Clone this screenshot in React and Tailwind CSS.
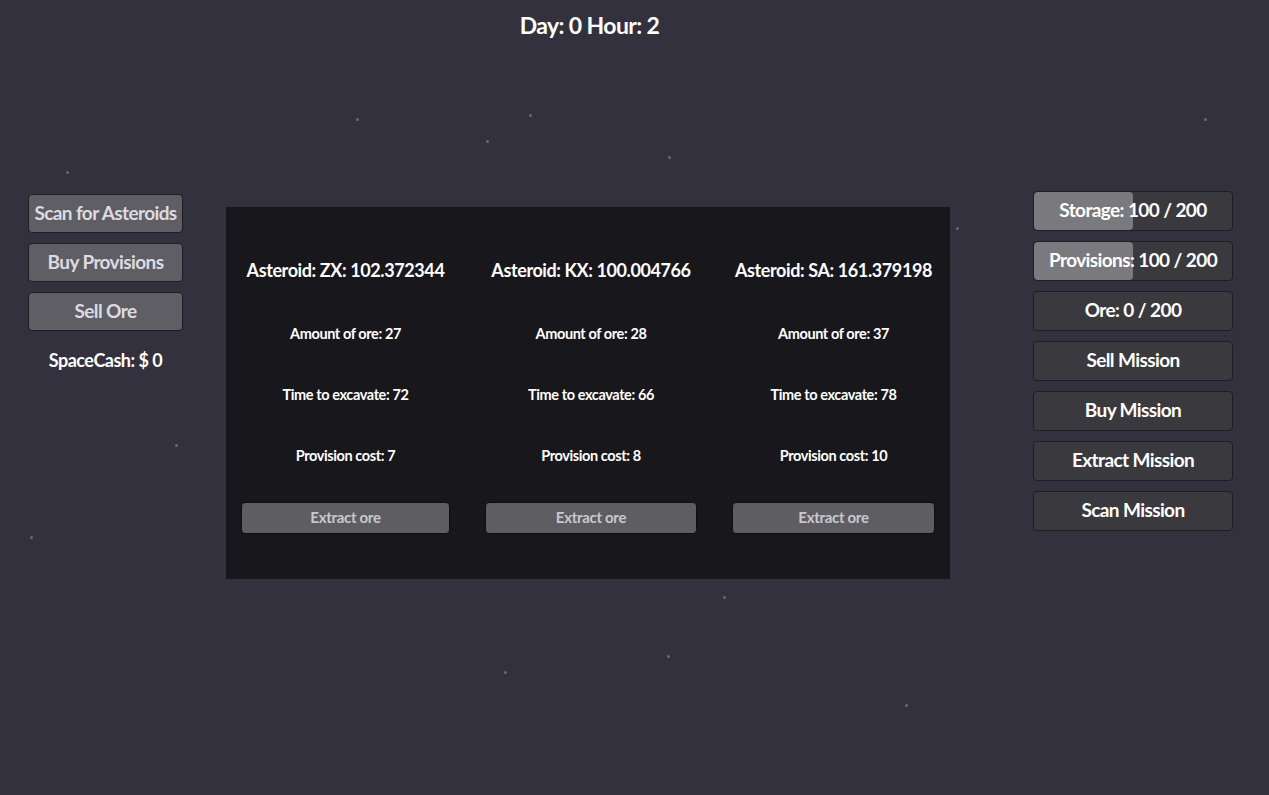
import React from 'react';

const stars = [
  [356, 118], [529, 114], [486, 140], [668, 156], [66, 171], [1204, 118],
  [956, 227], [175, 444], [30, 536], [604, 540], [339, 560], [723, 596],
  [667, 655], [504, 671], [905, 704], [432, 348],
];

const asteroids = [
  { name: 'ZX', dist: '102.372344', ore: 27, time: 72, cost: 7, w: 'w-[209px]' },
  { name: 'KX', dist: '100.004766', ore: 28, time: 66, cost: 8, w: 'w-[212px]' },
  { name: 'SA', dist: '161.379198', ore: 37, time: 78, cost: 10, w: 'w-[203px]' },
];

function LeftButton({ children }) {
  return (
    <button className="w-[155px] h-[39px] rounded-[4px] bg-[#5f5e65] border border-[#1d1c22] text-[#dcdbe0] text-[19px] font-bold tracking-[-0.6px]">
      {children}
    </button>
  );
}

function StatBar({ label, value, fill }) {
  return (
    <div className="relative w-[200px] h-[40px] rounded-[4px] bg-[#3a393e] border border-[#1d1c22] overflow-hidden">
      {fill > 0 && (
        <div className="absolute left-0 top-0 h-full bg-[#7a797e] rounded-[4px]" style={{ width: `${fill * 100}%` }} />
      )}
      <div className="relative h-full flex items-center justify-center text-white text-[19px] font-bold tracking-[-0.6px]">
        {label}: {value}
      </div>
    </div>
  );
}

function MissionButton({ children }) {
  return (
    <button className="w-[200px] h-[40px] rounded-[4px] bg-[#3a393e] border border-[#1d1c22] text-white text-[19px] font-bold tracking-[-0.6px]">
      {children}
    </button>
  );
}

export default function App() {
  return (
    <div className="relative w-full h-[795px] bg-[#34313e] overflow-hidden font-['Lato','Liberation_Sans',sans-serif]">
      {/* stars */}
      {stars.map(([x, y], i) => (
        <div key={i} className="absolute w-[3px] h-[3px] rounded-full bg-[#6d6a78]" style={{ left: x, top: y }} />
      ))}

      <div className="relative flex justify-center pt-[8px] pr-[90px]">
        <h1 className="text-white text-[23px] font-bold tracking-[-0.6px]">Day: 0 Hour: 2</h1>
      </div>

      <div className="relative flex items-start mt-[164px] pl-[28px]">
        {/* left controls */}
        <div className="flex flex-col items-center gap-[10px] mt-[-13px]">
          <LeftButton>Scan for Asteroids</LeftButton>
          <LeftButton>Buy Provisions</LeftButton>
          <LeftButton>Sell Ore</LeftButton>
          <div className="mt-[6px] text-white text-[18px] font-bold tracking-[-0.5px]">SpaceCash: $ 0</div>
        </div>

        {/* asteroid panel */}
        <div className="ml-[43px] w-[724px] h-[372px] bg-[#18171c] flex gap-[35px] px-[15px] pt-[50px]">
          {asteroids.map((a) => (
            <div key={a.name} className={`${a.w} flex flex-col items-center text-white`}>
              <div className="text-[18px] font-bold tracking-[-0.4px] h-[26px] leading-[26px]">Asteroid: {a.name}: {a.dist}</div>
              <div className="mt-[41px] text-[14.5px] font-bold tracking-[-0.4px] h-[20px] leading-[20px]">Amount of ore: {a.ore}</div>
              <div className="mt-[41px] text-[14.5px] font-bold tracking-[-0.4px] h-[20px] leading-[20px]">Time to excavate: {a.time}</div>
              <div className="mt-[41px] text-[14.5px] font-bold tracking-[-0.4px] h-[20px] leading-[20px]">Provision cost: {a.cost}</div>
              <button className="mt-[36px] w-full h-[32px] rounded-[4px] bg-[#5e5d62] border border-[#0e0d11] text-[#c9c8cc] text-[15px] font-bold tracking-[-0.3px]">
                Extract ore
              </button>
            </div>
          ))}
        </div>

        {/* right stats */}
        <div className="ml-[83px] flex flex-col gap-[10px] mt-[-16px]">
          <StatBar label="Storage" value="100 / 200" fill={0.5} />
          <StatBar label="Provisions" value="100 / 200" fill={0.5} />
          <StatBar label="Ore" value="0 / 200" fill={0} />
          <MissionButton>Sell Mission</MissionButton>
          <MissionButton>Buy Mission</MissionButton>
          <MissionButton>Extract Mission</MissionButton>
          <MissionButton>Scan Mission</MissionButton>
        </div>
      </div>
    </div>
  );
}
